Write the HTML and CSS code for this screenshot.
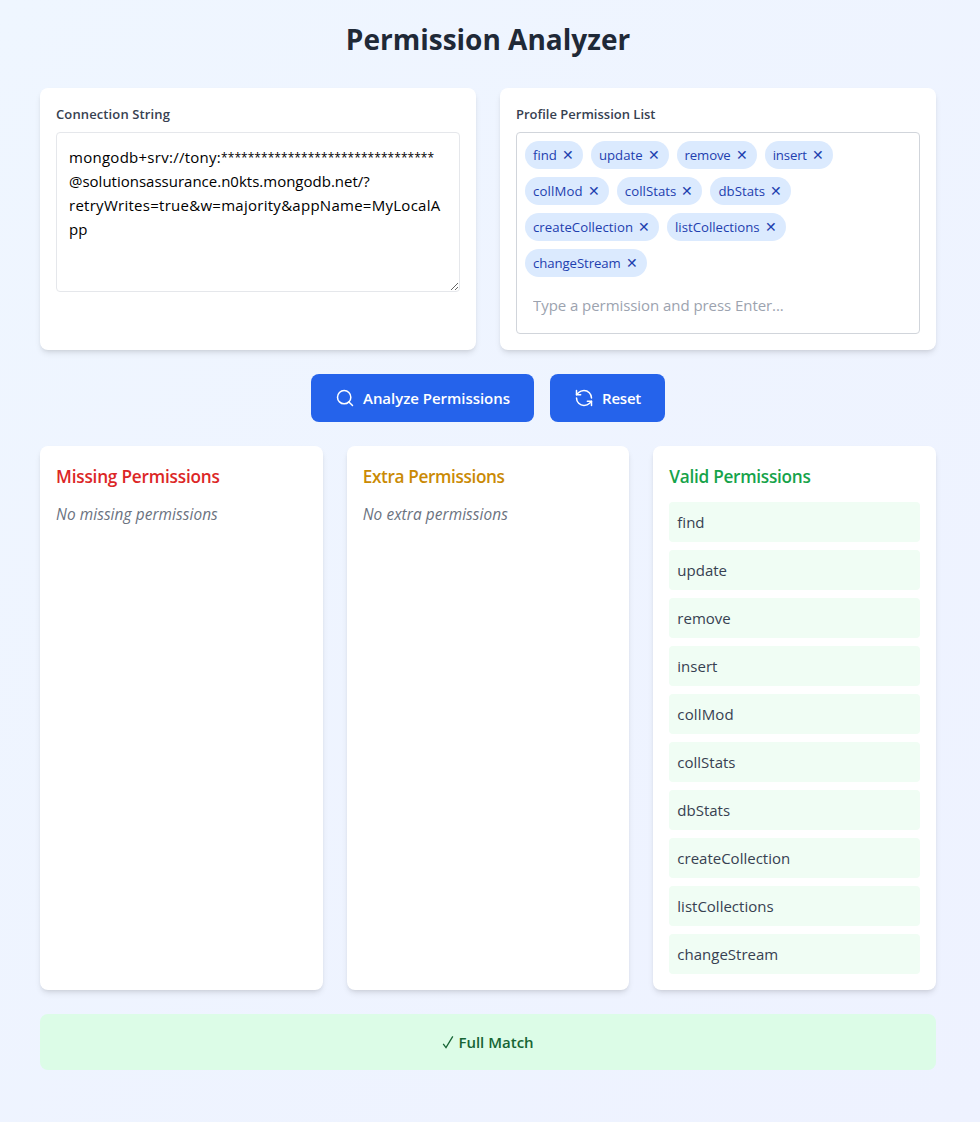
FILE: index.html
```html
<!DOCTYPE html>
<html lang="en">
<head>
<meta charset="utf-8">
<title>Permission Analyzer</title>
<link rel="stylesheet" href="styles.css">
</head>
<body>
<main class="page">
  <h1 class="title">Permission Analyzer</h1>

  <section class="inputs">
    <div class="card">
      <div class="label label-conn">Connection String</div>
      <div class="textarea" role="textbox" aria-multiline="true"><div class="wide">mongodb+srv://tony:<span class="mask">********************************</span></div><div>@solutionsassurance.n0kts.mongodb.net/?</div><div class="wide">retryWrites=true&amp;w=majority&amp;appName=MyLocalA</div><div>pp</div></div>
    </div>
    <div class="card">
      <div class="label">Profile Permission List</div>
      <div class="tagbox">
        <div class="chips">
          <span class="chip"><span class="name">find</span><button class="x">✕</button></span>
          <span class="chip"><span class="name">update</span><button class="x">✕</button></span>
          <span class="chip"><span class="name tight">remove</span><button class="x">✕</button></span>
          <span class="chip"><span class="name tight">insert</span><button class="x">✕</button></span>
          <span class="chip"><span class="name loose">collMod</span><button class="x">✕</button></span>
          <span class="chip"><span class="name slight">collStats</span><button class="x">✕</button></span>
          <span class="chip"><span class="name slight">dbStats</span><button class="x">✕</button></span>
          <span class="chip"><span class="name slight">createCollection</span><button class="x">✕</button></span>
          <span class="chip"><span class="name">listCollections</span><button class="x">✕</button></span>
          <span class="chip"><span class="name snug">changeStream</span><button class="x">✕</button></span>
        </div>
        <input class="entry" type="text" placeholder="Type a permission and press Enter...">
      </div>
    </div>
  </section>

  <div class="actions">
    <button class="btn btn-analyze">
      <svg class="icon" viewBox="0 0 24 24"><circle cx="11" cy="11" r="8"/><path d="m21 21-4.3-4.3"/></svg>
      <span>Analyze Permissions</span>
    </button>
    <button class="btn btn-reset">
      <svg class="icon" viewBox="0 0 24 24"><path d="M21 12a9 9 0 0 0-9-9 9.75 9.75 0 0 0-6.74 2.74L3 8"/><path d="M3 3v5h5"/><path d="M3 12a9 9 0 0 0 9 9 9.75 9.75 0 0 0 6.74-2.74L21 16"/><path d="M16 16h5v5"/></svg>
      <span>Reset</span>
    </button>
  </div>

  <section class="results">
    <div class="card">
      <h2 class="heading missing">Missing Permissions</h2>
      <p class="empty">No missing permissions</p>
    </div>
    <div class="card">
      <h2 class="heading extra">Extra Permissions</h2>
      <p class="empty">No extra permissions</p>
    </div>
    <div class="card">
      <h2 class="heading valid">Valid Permissions</h2>
      <ul class="list">
        <li>find</li>
        <li>update</li>
        <li>remove</li>
        <li>insert</li>
        <li class="loose">collMod</li>
        <li>collStats</li>
        <li>dbStats</li>
        <li>createCollection</li>
        <li>listCollections</li>
        <li>changeStream</li>
      </ul>
    </div>
  </section>

  <div class="banner">
    <svg class="check" viewBox="0 0 12 14"><path d="M1.2 8.8 4 12.6 10.8 1.4"/></svg>
    <span>Full Match</span>
  </div>
</main>
</body>
</html>
```

FILE: styles.css
```css
* { box-sizing: border-box; }
body {
  margin: 0;
  min-height: 1122px;
  background: linear-gradient(to bottom right, #eff6ff, #eef2ff);
  font-family: "Open Sans", "Noto Sans", sans-serif;
  font-size: 15px;
  line-height: 24px;
  color: #374151;
}
h1, h2, p, ul { margin: 0; padding: 0; }
button { border: 0; font-family: inherit; }
.page { padding: 21px 44px 0 40px; }
.title {
  margin-bottom: 31px;
  font-size: 28px;
  line-height: 36px;
  font-weight: 700;
  text-align: center;
  color: #1f2937;
}
.inputs { display: grid; grid-template-columns: 1fr 1fr; gap: 24px; }
.card {
  padding: 16px;
  background: #fff;
  border-radius: 8px;
  box-shadow: 0 4px 6px -1px rgba(0, 0, 0, .1), 0 2px 4px -2px rgba(0, 0, 0, .1);
}
.label { margin-bottom: 8px; font-size: 13px; line-height: 20px; font-weight: 600; }
.label-conn { letter-spacing: .12px; }
.textarea {
  height: 160px;
  padding: 12px;
  border: 1px solid #e5e7eb;
  border-radius: 4px;
  overflow: hidden;
  resize: both;
  white-space: nowrap;
  color: #000;
}
.textarea div { height: 24px; }
.wide { letter-spacing: .27px; }
.mask { font-size: 12px; letter-spacing: .05px; vertical-align: 1px; line-height: 1; }
.tagbox { padding: 8px; border: 1px solid #d1d5db; border-radius: 4px; }
.chips { display: flex; flex-wrap: wrap; gap: 8px; margin-bottom: 8px; }
.chip {
  display: flex;
  align-items: center;
  height: 28px;
  padding: 0 8px;
  border-radius: 14px;
  background: #dbeafe;
  color: #1e40af;
  font-size: 13.2px;
  line-height: 20px;
}
.tight { letter-spacing: -.15px; }
.snug { letter-spacing: -.08px; }
.slight { letter-spacing: .05px; }
.loose { letter-spacing: .15px; }
.x { width: 14px; margin-left: 4px; padding: 0; background: none; color: inherit; font-size: 13.5px; line-height: 20px; }
.entry {
  display: block;
  width: 100%;
  height: 40px;
  padding: 8px;
  border: 0;
  background: none;
  font: inherit;
  letter-spacing: -.06px;
}
.entry::placeholder { color: #9ca3af; }
.actions { display: flex; justify-content: center; gap: 16px; margin: 24px 0; }
.btn {
  display: flex;
  align-items: center;
  gap: 8px;
  height: 48px;
  padding: 0 24px;
  border-radius: 8px;
  background: #2563eb;
  color: #fff;
  font-size: 15px;
  font-weight: 600;
  line-height: 24px;
  letter-spacing: -.04px;
  white-space: nowrap;
}
.btn-analyze { width: 223px; }
.btn-reset { width: 115px; letter-spacing: -.2px; }
.icon {
  flex: none;
  width: 20px;
  height: 20px;
  fill: none;
  stroke: currentColor;
  stroke-width: 1.8;
  stroke-linecap: round;
  stroke-linejoin: round;
}
.results { display: grid; grid-template-columns: repeat(3, 1fr); gap: 24px; }
.heading {
  padding-top: 1px;
  margin-bottom: 11px;
  font-size: 17.2px;
  line-height: 28px;
  font-weight: 600;
  letter-spacing: -.27px;
}
.missing { color: #dc2626; letter-spacing: -.2px; }
.extra { color: #ca8a04; letter-spacing: -.36px; }
.valid { color: #16a34a; }
.empty { padding-top: 1px; font-size: 15.4px; font-style: italic; letter-spacing: .08px; color: #6b7280; }
.list { display: grid; gap: 8px; list-style: none; }
.list li { height: 40px; padding: 8px; border-radius: 4px; background: #f0fdf4; }
.banner {
  display: flex;
  align-items: center;
  justify-content: center;
  gap: 4px;
  height: 56px;
  margin-top: 24px;
  border-radius: 8px;
  background: #dcfce7;
  color: #166534;
  font-weight: 600;
}
.check { width: 12px; height: 14px; fill: none; stroke: currentColor; stroke-width: 1.3; }
```
